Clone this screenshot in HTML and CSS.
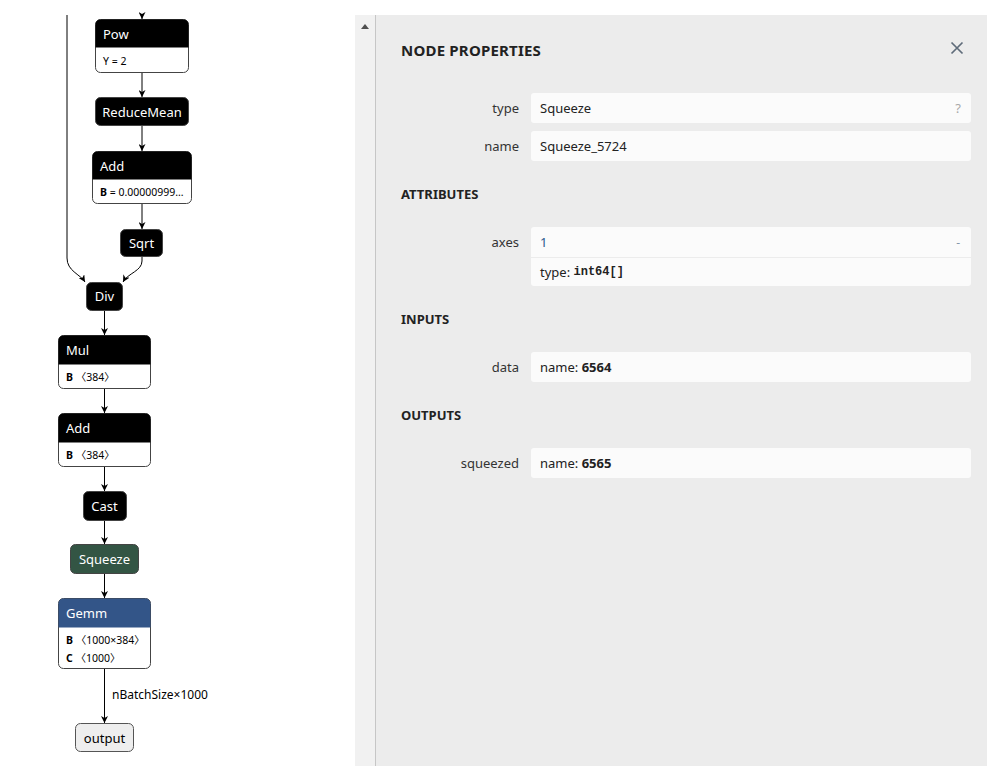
FILE: index.html
```html
<!DOCTYPE html>
<html>
<head>
<meta charset="utf-8">
<link rel="stylesheet" href="styles.css">
</head>
<body>
<div class="page">
  <div class="graph">
    <svg class="graph-svg" width="355" height="766" viewBox="0 0 355 766" xmlns="http://www.w3.org/2000/svg">
      <defs>
        <marker id="arrow" viewBox="0 0 10 10" refX="10" refY="5" markerWidth="7" markerHeight="7" orient="auto" markerUnits="userSpaceOnUse">
          <path d="M0,0 L10,5 L0,10 L3,5 Z" fill="#000"/>
        </marker>
      </defs>
      <g class="edges">
        <path d="M142,15 L142,19" marker-end="url(#arrow)"/>
        <path d="M142,73 L142,97" marker-end="url(#arrow)"/>
        <path d="M142,126 L142,151" marker-end="url(#arrow)"/>
        <path d="M142,204 L142,229" marker-end="url(#arrow)"/>
        <path d="M142,257 L142,261 C142,271 128,273 123,282" marker-end="url(#arrow)"/>
        <path d="M67,15 L67,258 C67,271 80,274 85,282" marker-end="url(#arrow)"/>
        <path d="M104.5,311 L104.5,335" marker-end="url(#arrow)"/>
        <path d="M104.5,389 L104.5,413" marker-end="url(#arrow)"/>
        <path d="M104.5,467 L104.5,491" marker-end="url(#arrow)"/>
        <path d="M104.5,521 L104.5,544" marker-end="url(#arrow)"/>
        <path d="M104.5,574 L104.5,598" marker-end="url(#arrow)"/>
        <path d="M104.5,669 L104.5,723" marker-end="url(#arrow)"/>
      </g>
      <text class="edge-label" x="112" y="699">nBatchSize×1000</text>

      <!-- Pow -->
      <rect class="node-body" x="95.5" y="19.5" width="93" height="53" rx="5"/>
      <path class="hdr-black" d="M95.5,47.5 V24.5 A5,5 0 0 1 100.5,19.5 H183.5 A5,5 0 0 1 188.5,24.5 V47.5 Z"/>
      <text class="hdr-text" x="103" y="38.5">Pow</text>
      <text class="attr" x="103" y="64.5">Y = 2</text>

      <!-- ReduceMean -->
      <rect class="node-black" x="95.5" y="97.5" width="93" height="28" rx="5"/>
      <text class="hdr-text" x="142" y="116.5" text-anchor="middle">ReduceMean</text>

      <!-- Add -->
      <rect class="node-body" x="92.5" y="151.5" width="99" height="52" rx="5"/>
      <path class="hdr-black" d="M92.5,179.5 V156.5 A5,5 0 0 1 97.5,151.5 H186.5 A5,5 0 0 1 191.5,156.5 V179.5 Z"/>
      <text class="hdr-text" x="100" y="170.5">Add</text>
      <text class="attr" x="100" y="196"><tspan class="attr-name">B</tspan> = 0.00000999…</text>

      <!-- Sqrt -->
      <rect class="node-black" x="120.5" y="229.5" width="42" height="27" rx="5"/>
      <text class="hdr-text" x="141.5" y="248" text-anchor="middle">Sqrt</text>

      <!-- Div -->
      <rect class="node-black" x="86.5" y="282.5" width="36" height="28" rx="5"/>
      <text class="hdr-text" x="104.5" y="301" text-anchor="middle">Div</text>

      <!-- Mul -->
      <rect class="node-body" x="58.5" y="335.5" width="92" height="53" rx="5"/>
      <path class="hdr-black" d="M58.5,364.5 V340.5 A5,5 0 0 1 63.5,335.5 H145.5 A5,5 0 0 1 150.5,340.5 V364.5 Z"/>
      <text class="hdr-text" x="66" y="355">Mul</text>
      <text class="attr" x="66" y="381"><tspan class="attr-name">B</tspan> 〈384〉</text>

      <!-- Add 2 -->
      <rect class="node-body" x="58.5" y="413.5" width="92" height="53" rx="5"/>
      <path class="hdr-black" d="M58.5,442.5 V418.5 A5,5 0 0 1 63.5,413.5 H145.5 A5,5 0 0 1 150.5,418.5 V442.5 Z"/>
      <text class="hdr-text" x="66" y="433">Add</text>
      <text class="attr" x="66" y="459"><tspan class="attr-name">B</tspan> 〈384〉</text>

      <!-- Cast -->
      <rect class="node-black" x="83.5" y="491.5" width="43" height="29" rx="5"/>
      <text class="hdr-text" x="104.5" y="510.5" text-anchor="middle">Cast</text>

      <!-- Squeeze -->
      <rect class="node-green" x="70.5" y="544.5" width="68" height="29" rx="5"/>
      <text class="hdr-text" x="104.5" y="564" text-anchor="middle">Squeeze</text>

      <!-- Gemm -->
      <rect class="node-body" x="58.5" y="598.5" width="92" height="70" rx="5"/>
      <path class="hdr-blue" d="M58.5,627.5 V603.5 A5,5 0 0 1 63.5,598.5 H145.5 A5,5 0 0 1 150.5,603.5 V627.5 Z"/>
      <text class="hdr-text" x="66" y="618">Gemm</text>
      <text class="attr" x="66" y="643.5"><tspan class="attr-name">B</tspan> 〈1000×384〉</text>
      <text class="attr" x="66" y="661.5"><tspan class="attr-name">C</tspan> 〈1000〉</text>

      <!-- output -->
      <rect class="node-output" x="75.5" y="723.5" width="58" height="28" rx="5"/>
      <text class="out-text" x="104.5" y="742.5" text-anchor="middle">output</text>
    </svg>
  </div>

  <div class="sidebar">
    <div class="scrollbar">
      <div class="scroll-up"></div>
    </div>
    <div class="panel">
      <div class="panel-title-row">
        <div class="panel-title">NODE PROPERTIES</div>
        <svg class="close-icon" width="14" height="14" viewBox="0 0 14 14" xmlns="http://www.w3.org/2000/svg">
          <path d="M1.5,1.5 L12.5,12.5 M12.5,1.5 L1.5,12.5"/>
        </svg>
      </div>

      <div class="rows">
        <div class="row">
          <div class="label">type</div>
          <div class="value-box">
            <div class="value-line"><span>Squeeze</span><span class="hint">?</span></div>
          </div>
        </div>
        <div class="row">
          <div class="label">name</div>
          <div class="value-box">
            <div class="value-line"><span>Squeeze_5724</span></div>
          </div>
        </div>
      </div>

      <div class="section-title">ATTRIBUTES</div>
      <div class="rows">
        <div class="row">
          <div class="label">axes</div>
          <div class="value-box">
            <div class="value-line"><span class="value-num">1</span><span class="expander">-</span></div>
            <div class="value-line value-sub">type:&nbsp;<code class="mono">int64[]</code></div>
          </div>
        </div>
      </div>

      <div class="section-title">INPUTS</div>
      <div class="rows">
        <div class="row">
          <div class="label">data</div>
          <div class="value-box">
            <div class="value-line"><span>name: <b>6564</b></span></div>
          </div>
        </div>
      </div>

      <div class="section-title">OUTPUTS</div>
      <div class="rows">
        <div class="row">
          <div class="label">squeezed</div>
          <div class="value-box">
            <div class="value-line"><span>name: <b>6565</b></span></div>
          </div>
        </div>
      </div>
    </div>
  </div>
</div>
</body>
</html>
```

FILE: styles.css
```css
* { box-sizing: border-box; }

html, body {
  margin: 0;
  padding: 0;
  background: #ffffff;
  font-family: "Noto Sans", "Open Sans", sans-serif;
}

.page {
  display: flex;
  width: 987px;
  height: 766px;
  overflow: hidden;
}

.graph {
  width: 355px;
  height: 766px;
  flex: none;
}

.graph-svg { display: block; }

.edges path {
  fill: none;
  stroke: #000;
  stroke-width: 1px;
}

.node-body {
  fill: #fff;
  stroke: #444;
  stroke-width: 1px;
}

.hdr-black { fill: #000; }
.hdr-blue { fill: rgb(51, 85, 136); }

.node-black {
  fill: #000;
  stroke: #444;
  stroke-width: 1px;
}

.node-green {
  fill: rgb(51, 85, 68);
  stroke: #444;
  stroke-width: 1px;
}

.node-output {
  fill: #eeeeee;
  stroke: #555;
  stroke-width: 1px;
}

.hdr-text {
  fill: #fff;
  font-family: "Noto Sans", sans-serif;
  font-size: 13px;
}

.out-text {
  fill: #000;
  font-family: "Noto Sans", sans-serif;
  font-size: 13px;
}

.attr {
  fill: #000;
  font-family: "Noto Sans", "Noto Sans CJK SC", sans-serif;
  font-size: 10.5px;
}

.attr-name { font-weight: bold; }

.edge-label {
  fill: #000;
  font-family: "Noto Sans", sans-serif;
  font-size: 12px;
}

/* sidebar */
.sidebar {
  flex: 1;
  margin-top: 15px;
  height: 751px;
  display: flex;
  background: #ececec;
}

.scrollbar {
  width: 21px;
  flex: none;
  background: #f1f1f1;
  border-right: 1px solid #c6c6c6;
}

.scroll-up {
  margin: 9px 0 0 6px;
  width: 0;
  height: 0;
  border-left: 4.5px solid transparent;
  border-right: 4.5px solid transparent;
  border-bottom: 5px solid #505050;
}

.panel {
  flex: 1;
  padding: 26px 16px 0 25px;
  color: #333;
  font-size: 13px;
}

.panel-title-row {
  display: flex;
  justify-content: space-between;
  align-items: center;
  height: 18px;
  margin-bottom: 34px;
}

.panel-title {
  font-weight: bold;
  font-size: 15px;
  line-height: 18px;
  color: #222;
  letter-spacing: 0.2px;
}

.close-icon {
  margin-right: 7px;
  margin-top: -4px;
}

.close-icon path {
  stroke: #5f6c7a;
  stroke-width: 1.7px;
  fill: none;
}

.section-title {
  font-weight: bold;
  font-size: 13px;
  line-height: 18px;
  color: #222;
  margin: 24px 0 24px;
}

.rows {
  display: flex;
  flex-direction: column;
  gap: 8px;
}

.row {
  display: flex;
  align-items: flex-start;
}

.label {
  width: 118px;
  flex: none;
  text-align: right;
  line-height: 30px;
  color: #333;
}

.value-box {
  margin-left: 12px;
  flex: 1;
  background: #fbfbfb;
  border-radius: 3px;
}

.value-line {
  display: flex;
  justify-content: space-between;
  align-items: center;
  height: 30px;
  padding: 0 9px;
  color: #222;
}

.value-sub {
  justify-content: flex-start;
  border-top: 1px solid #ececec;
  height: 29px;
}

.value-line b { font-weight: bold; }

.hint {
  color: #a8a8a8;
  font-size: 13px;
  margin-right: 1px;
}

.expander {
  color: #8898aa;
  font-size: 12px;
  margin-right: 2px;
}

.value-num { color: #2c5a8e; }

.mono {
  font-family: "Liberation Mono", "DejaVu Sans Mono", monospace;
  font-weight: bold;
  font-size: 12px;
}
```
